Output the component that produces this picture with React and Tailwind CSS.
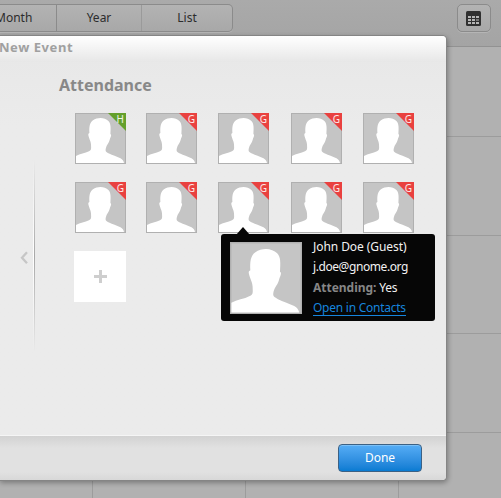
import React from 'react';

const GUESTS = ['H', 'G', 'G', 'G', 'G', 'G', 'G', 'G', 'G', 'G'];

function Silhouette({ className }) {
  return (
    <svg viewBox="0 0 51 51" className={className}>
      <rect width="51" height="51" fill="#b0b0b0" />
      <rect x="1" y="1" width="49" height="49" fill="#c5c5c5" />
      <path
        fill="#fff"
        d="M1 50V43C5 40.8 10 40.5 14 38.3C16.5 37 16.2 36 16 31.5C15.8 28 14.5 27 13.4 22.5C13 20.5 13.8 20.5 14.4 20C14 14 14.6 9.5 18 7.2C20 5.8 23 5 25.5 5C28.5 5 31.5 6.2 33.4 8C36 10.5 35.8 15 35.4 21C37 22 35.5 24 34.8 26.5C34 30 31.5 32 30.8 35.5C30.2 38.5 31 38.8 34 40.6C37.5 42.4 41.5 43.5 45.5 45.3C47.5 46.3 48.6 48 49 50Z"
      />
    </svg>
  );
}

function Guest({ role }) {
  return (
    <div className="relative h-[51px] w-[51px]">
      <Silhouette className="block h-full w-full" />
      <svg viewBox="0 0 18 18" className="absolute right-0 top-0 h-[18px] w-[18px]">
        <path d="M0 0H18V18Z" fill={role === 'H' ? '#64a02b' : '#e9413f'} />
      </svg>
      <span className="absolute right-[2px] top-0 text-[10px] leading-[12px] text-white/90">{role}</span>
    </div>
  );
}

function CalendarIcon() {
  return (
    <svg viewBox="0 0 15 15" className="h-[15px] w-[15px]">
      <rect width="15" height="15" rx="1.5" fill="#303030" />
      {[5, 8, 11].map((y) =>
        [2, 6, 10].map((x) => (
          <rect key={`${x}-${y}`} x={x} y={y} width="3" height="2" fill={x === 10 && y === 8 ? '#777' : '#b5b5b5'} />
        ))
      )}
    </svg>
  );
}

function CalendarPage() {
  return (
    <div className="flex h-full flex-col">
      <header className="flex h-[47px] shrink-0 items-start justify-between border-b border-[#929292] bg-gradient-to-b from-[#aaaaaa] to-[#a4a4a4] pr-[10px] pt-[4px]">
        <div className="flex h-[28px] w-[233px] rounded-r-[5px] border border-l-0 border-[#8b8b8b] bg-gradient-to-b from-[#b3b3b3] to-[#a8a8a8] text-[12px] leading-[26px] text-[#2c2c2c] shadow-[0_1px_0_#b5b5b5]">
          <span className="w-[57px] border-r border-[#8b8b8b]">
            <span className="-ml-[5px]">Month</span>
          </span>
          <span className="w-[85px] border-r border-[#9a9a9a] text-center">Year</span>
          <span className="flex-1 text-center">List</span>
        </div>
        <div className="flex h-[28px] w-[34px] items-center justify-center rounded-[5px] border border-[#8b8b8b] bg-gradient-to-b from-[#b3b3b3] to-[#a8a8a8] pr-[2px] pt-[1px] shadow-[0_1px_0_#b5b5b5]">
          <CalendarIcon />
        </div>
      </header>
      <div className="grid flex-1 grid-cols-[93px_153px_153px_153px] grid-rows-[90px_99px_98px_99px_98px] overflow-hidden bg-[#b1b1b1]">
        {Array.from({ length: 20 }, (_, i) => (
          <div key={i} className="border-b border-r border-[#9c9c9c]" />
        ))}
      </div>
    </div>
  );
}

function ContactCard() {
  return (
    <div className="absolute left-[221px] top-[198px] flex h-[87px] w-[214px] rounded-[3px] bg-[#060606] pl-[9px] pt-[8px]">
      <svg viewBox="0 0 14 8" className="absolute -top-[7px] left-[15px] h-[8px] w-[14px]">
        <path d="M0 8L7 0L14 8Z" fill="#060606" />
      </svg>
      <Silhouette className="h-[72px] w-[72px]" />
      <div className="flex flex-col pl-[11px] text-[12px] leading-[20px] text-[#f2f2f2]">
        <span className="mt-[-5px] h-[20px] tracking-[-0.07px]">John Doe (Guest)</span>
        <span className="h-[21px] tracking-[-0.42px]">j.doe@gnome.org</span>
        <span className="h-[20px] whitespace-nowrap tracking-[-0.24px]">
          <b className="tracking-[-0.02px] text-[#868686]">Attending:</b> Yes
        </span>
        <a className="mt-[2px] h-[16px] self-start border-b border-[#1685dd] leading-[15px] tracking-[-0.25px] text-[#1685dd]">Open in Contacts</a>
      </div>
    </div>
  );
}

function EventDialog() {
  return (
    <section className="absolute left-0 top-[36px] flex h-[444px] w-[446px] flex-col rounded-r-[4px] bg-gradient-to-b from-[#e7e7e7] to-[#ebebeb] to-20% shadow-[0_0_0_1px_#858585,1px_2px_5px_1px_rgba(0,0,0,0.3)]">
      <div className="h-[26px] shrink-0 rounded-tr-[4px] bg-gradient-to-b from-white to-[#e7e7e7]">
        <h1 className="-ml-[1px] pt-[2px] text-[13px] font-bold leading-[18px] tracking-[0.55px] text-[#a0a0a0]">New Event</h1>
      </div>
      <div className="flex h-[374px] shrink-0 border-b border-[#f5f5f5]">
        <div className="flex w-[35px] shrink-0">
          <div className="w-[33px] pl-[20px] pt-[189px]">
            <svg viewBox="0 0 8 13" className="h-[13px] w-[8px]">
              <path d="M7 1.2L2 6.7L7 12.2" fill="none" stroke="#c6c6c6" strokeWidth="2.3" />
            </svg>
          </div>
          <div className="mt-[98px] h-[192px] w-px bg-gradient-to-b from-transparent via-white to-transparent" />
          <div className="mt-[98px] h-[192px] w-px bg-gradient-to-b from-transparent via-[#a8a8a8] to-transparent" />
        </div>
        <div className="pl-[24px] pt-[12px]">
          <h2 className="text-[16px] font-bold leading-[22px] text-[#888888]">Attendance</h2>
          <div className="ml-[16px] mt-[17px] grid grid-cols-[71px_72px_73px_72px_51px] gap-y-[18px]">
            {GUESTS.map((role, i) => (
              <Guest key={i} role={role} />
            ))}
            <button className="-ml-[1px] flex h-[51px] w-[52px] items-center justify-center bg-white">
              <svg viewBox="0 0 13 13" className="h-[13px] w-[13px]">
                <path d="M5 0H8V5H13V8H8V13H5V8H0V5H5Z" fill="#cecece" />
              </svg>
            </button>
          </div>
        </div>
      </div>
      <footer className="flex flex-1 items-start justify-end rounded-br-[4px] bg-[linear-gradient(#d2d2d2,#e1e1e1_12px,#e1e1e1_36px,#d8d8d8)] pr-[24px] pt-[8px]">
        <button className="h-[28px] w-[84px] rounded-[4px] border border-[#3c6184] bg-gradient-to-b from-[#55adf6] to-[#077bd2] text-[12px] leading-[26px] text-white shadow-[inset_0_1px_0_#7bc0f7]">
          Done
        </button>
      </footer>
      <ContactCard />
    </section>
  );
}

export default function App() {
  return (
    <main className="relative h-[498px] w-[501px] overflow-hidden font-['Noto_Sans',sans-serif]">
      <CalendarPage />
      <EventDialog />
    </main>
  );
}
